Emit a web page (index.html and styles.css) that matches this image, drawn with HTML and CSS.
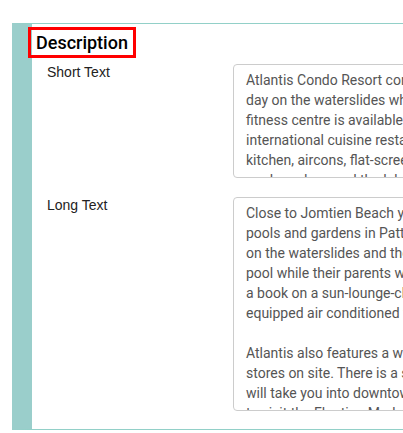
FILE: index.html
```html
<!DOCTYPE html>
<html lang="en">
<head>
<meta charset="utf-8">
<title>Description</title>
<link rel="stylesheet" href="styles.css">
</head>
<body>
<section class="panel">
  <h2 class="panel-title">Description</h2>
  <div class="field">
    <label class="field-label" for="short">Short Text</label>
    <div class="field-clip">
      <textarea id="short" class="field-input field-input--short" wrap="off" readonly>Atlantis Condo Resort combines family fun with relaxation. Spend the
day on the waterslides while parents relax by the pool. A modern
fitness centre is available for guests and there is an on-site
international cuisine restaurant. Each apartment comes with a
kitchen, aircons, flat-screen TV and a private balcony overlooking
pool, gardens and the lake.</textarea>
    </div>
  </div>
  <div class="field">
    <label class="field-label" for="long">Long Text</label>
    <div class="field-clip">
      <textarea id="long" class="field-input field-input--long" wrap="off" readonly>Close to Jomtien Beach you will find one of the largest water parks,
pools and gardens in Pattaya. Children can spend the whole day
on the waterslides and the lazy river, or splash in the kids
pool while their parents work out in the gym or relax with
a book on a sun-lounge-chair. All apartments are fully
equipped air conditioned with cable TV and a kitchenette.

Atlantis also features a wide range of restaurants, bars and
stores on site. There is a shuttle bus service that
will take you into downtown Pattaya and Jomtien, or
to visit the Floating Market and other attractions.</textarea>
    </div>
  </div>
</section>
</body>
</html>
```

FILE: styles.css
```css
html {
  overflow: hidden;
}

body {
  margin: 0;
  background: #ffffff;
  font-family: "Liberation Sans", Arial, sans-serif;
}

.panel {
  margin: 23px 0 0 12px;
  border-left: 20px solid #9acecb;
  border-top: 1px solid #92d0c8;
  border-bottom: 1px solid #92d0c8;
  padding: 0 0 20px 15px;
  height: 407px;
  box-sizing: border-box;
}

.panel-title {
  display: inline-block;
  margin: 3px 0 0 -19px;
  padding: 0 5px;
  border: 3px solid #ff0000;
  font-family: Roboto, "Noto Sans", sans-serif;
  font-size: 18px;
  font-weight: 500;
  line-height: 25px;
  color: #000000;
}

.field {
  display: grid;
  grid-template-columns: 186px 1fr;
  margin-top: 6px;
}

.field + .field {
  margin-top: 19px;
}

.field-label {
  font-size: 14px;
  line-height: 17px;
  color: #222222;
}

.field-clip {
  overflow: hidden;
  min-width: 0;
}

.field-input {
  display: block;
  box-sizing: border-box;
  width: 300px;
  margin: 0;
  padding: 5px 12px;
  border: 1px solid #cccccc;
  border-radius: 4px;
  background: #ffffff;
  font-family: Roboto, "Noto Sans", sans-serif;
  font-size: 14px;
  line-height: 20px;
  color: #555555;
  resize: none;
  overflow: hidden;
  outline: none;
}

.field-input--short {
  height: 114px;
}

.field-input--long {
  height: 214px;
}
```
